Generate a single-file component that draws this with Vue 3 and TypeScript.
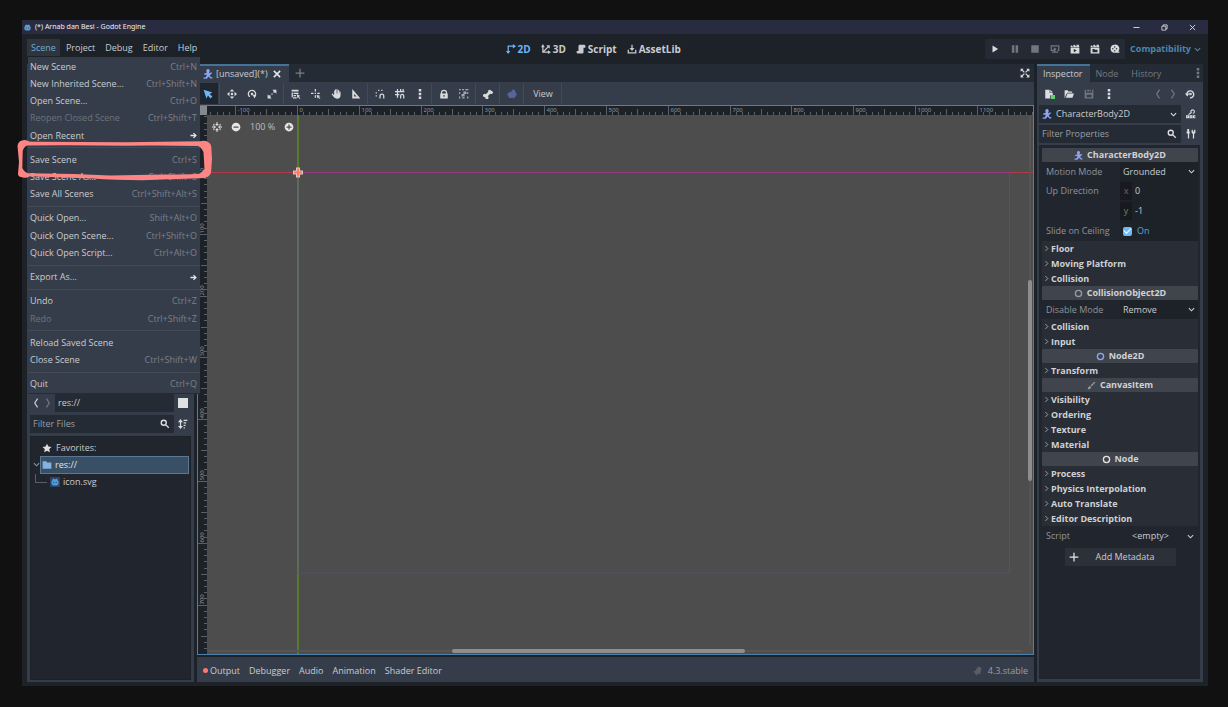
<script setup lang="ts">
import { h } from 'vue'

interface Glyph { fill?: string; stroke?: string; width?: number }

const glyphs: Record<string, Glyph> = {
  play: { fill: 'M4 2.5v11l9-5.5z' },
  pause: { fill: 'M3 2h4v12H3zM9 2h4v12H9z' },
  stop: { fill: 'M2 2h12v12H2z' },
  remote: { fill: 'M1 2h14v9h-3v-2h1V4H3v5h3v2H1zM6 5l5 3-5 3zM7 10h2v2h4v2H3v-2h4z' },
  clapPlay: { fill: 'M1 3l2-1 1 2h2L5 1.5l3-.5 1 2.500h2L10 1h4l1 4H1zM1 6h14v9H1zM6 8v5l5-2.500z' },
  clapFolder: { fill: 'M1 3l2-1 1 2h2L5 1.5l3-.5 1 2.500h2L10 1h4l1 4H1zM1 6h14v9H1zM4 8v5h8V9H8L7 8z' },
  movie: { fill: 'M7.500 1a6.500 6.500 0 1 0 0 13H15v-2h-2A6.500 6.500 0 0 0 7.500 1zM7.500 3.500a1.200 1.200 0 1 1 0 2.400 1.200 1.200 0 0 1 0-2.400zM4.500 6.500a1.200 1.200 0 1 1 0 2.400 1.200 1.200 0 0 1 0-2.400zM10.500 6.500a1.200 1.200 0 1 1 0 2.400 1.200 1.200 0 0 1 0-2.400zM7.500 9.500a1.200 1.200 0 1 1 0 2.400 1.200 1.200 0 0 1 0-2.400z' },
  twoD: { stroke: 'M3.500 13V3.500H13', fill: 'M11 0l5 3.500L11 7zM0 11h7l-3.500 5z', width: 2 },
  threeD: { stroke: 'M3 3v10h10M3 13L12 4', fill: 'M0 5l3-5 3 5zM11 10l5 3-5 3zM8.500 2H14v5.500z', width: 2 },
  script: { fill: 'M6 1a2 2 0 0 0-2 2v8H1v2a2 2 0 0 0 2 2h7a2 2 0 0 0 2-2V6h3V3a2 2 0 0 0-2-2z' },
  assetLib: { stroke: 'M2 9v5h12V9M8 1v8', fill: 'M4 6.500h8L8 11z', width: 2 },
  select: { fill: 'M1 1l4.500 14 2.500-4.500L12 15l3-3-4.500-4L15 5.500z' },
  move: { fill: 'M8 0L4.500 4h7zM8 16l-3.500-4h7zM0 8l4-3.500v7zM16 8l-4-3.500v7zM8 6a2 2 0 1 0 0 4 2 2 0 0 0 0-4z' },
  rotate: { stroke: 'M4.500 12.500A5.800 5.800 0 1 1 12 12', fill: 'M9 9h6l-3 6zM8 6a2 2 0 1 0 0 4 2 2 0 0 0 0-4z', width: 2 },
  scale: { stroke: 'M10.500 5.500l2-2M5.500 10.500l-2 2', fill: 'M8.500 1H15v6.500zM1 8.500V15h6.500zM7 7h2v2H7z', width: 2.4 },
  list: { fill: 'M1 1h11v3H1zM1 5.500h2V15H1zM4 6h8v2H4zM4 9.500h4v2H4zM4 13h5v2H4zM1 13h3v2H1zM9 8l6 3-2.500 1L15 15l-1 1-2.500-3L10.500 15z' },
  pivot: { stroke: 'M7 0v4M0 7h4M7 10v4M10 7h4', fill: 'M6 6h2v2H6zM9 9l6 2-2.500 1.500L15 15l-1 1-2.500-2.500L10.500 15.500z', width: 2 },
  pan: { fill: 'M6 1.500a1 1 0 0 1 2 0V7h.6V1a1 1 0 0 1 2 0v6h.6V2.500a1 1 0 0 1 2 0V7h.3V5a.9.9 0 0 1 1.800 0v5a5.500 5.500 0 0 1-5.500 5.500C6 15.500 4 13 1 8.500c0-1.500 2-1.500 2.500 0L5 10V3a.7.7 0 0 1 1 0z' },
  ruler: { fill: 'M2 0v15h13zM5 8l4 4H5z' },
  smartSnap: { fill: 'M1 5h2v2H1zM1 10h2v2H1zM5 1h2v2H5zM10 1h2v2h-2z', stroke: 'M8 15v-4a3 3 0 0 1 6 0v4', width: 2 },
  gridSnap: { stroke: 'M4 0v14M0 4h15M0 9h7M9 0v5M13 0v5M9 15v-4a2.500 2.500 0 0 1 5 0v4', width: 2 },
  dots: { fill: 'M6 0h4v4H6zM6 6h4v4H6zM6 12h4v4H6z' },
  lock: { fill: 'M8 1a5 5 0 0 0-5 5v1H2v8h12V7h-1V6a5 5 0 0 0-5-5zM8 3a3 3 0 0 1 3 3v1H5V6a3 3 0 0 1 3-3zM7 9.500h2v3H7z' },
  group: { fill: 'M0 0h3v2H0zM5 0h3v2H5zM10 0h5v2h-5zM0 5h2v3H0zM13 5h2v3h-2zM0 12h2v3H0zM5 13h4v2H5zM13 12h2v3h-2zM7 4h5v4H7zM4 8h5v4H4z' },
  bone: { fill: 'M10.500 1A2.600 2.600 0 0 0 8.500 4.500L4.500 8.500A2.600 2.600 0 1 0 4 12.500a2.600 2.600 0 1 0 3.500-1L11.500 7.500A2.600 2.600 0 1 0 13 3a2.600 2.600 0 0 0-2.500-2z' },
  blob: { fill: 'M9 1a3 3 0 0 1 4 4c3 1 3 5 1 6-1 3-4 4-6 3-3 1-6 0-6-3-2-1-2-5 1-5 1-2 3-2 4-1 0-2 1-3 2-4z' },
  expand: { stroke: 'M3 3l4 4M13 3L9 7M3 13l4-4M13 13L9 9', fill: 'M1 1h5L1 6zM15 1v5l-5-5zM1 15v-5l5 5zM15 15h-5l5-5z', width: 2 },
  center: { stroke: 'M8 0v4M8 12v4M0 8h4M12 8h4M3 3v3M13 3v3M3 10v3M13 10v3', fill: 'M5 3h6L8 6.500zM5 13h6L8 9.500zM3.500 5.500v5L6.500 8zM12.500 5.500v5L9.500 8z', width: 1.6 },
  minus: { fill: 'M8 1a7 7 0 1 0 0 14A7 7 0 0 0 8 1zM4 7h8v2H4z' },
  plus: { fill: 'M8 1a7 7 0 1 0 0 14A7 7 0 0 0 8 1zM7 4h2v3h3v2H9v3H7V9H4V7h3z' },
  add: { stroke: 'M8 1v14M1 8h14', width: 2 },
  close: { stroke: 'M3 3l10 10M13 3L3 13', width: 2.5 },
  body: { fill: 'M8 0a3 3 0 0 1 2 5v2l3-2 1.500 1.500L11 10v1l2 2h2v2h-3l-3-3-3 3.500H1v-2h3l2-3V9H2V7l4-1V5a3 3 0 0 1 2-5z' },
  doc: { fill: 'M2 1h7v5h5v4h-4v5H2zM10 1l4 4h-4z' },
  openFolder: { fill: 'M1 2h5l1 2h6v2H5l-3 6V14H1zM5.500 7H16l-2.500 7H3z' },
  save: { fill: 'M1 1h2v5h10V1h2v14H1zM5 1h3v3H5zM9 1h2v3H9zM4 9v4h8V9z' },
  prev: { stroke: 'M10.500 1L6 8l4.500 7', width: 2 },
  next: { stroke: 'M5.500 1L10 8l-4.500 7', width: 2 },
  history: { stroke: 'M3 9a5.500 5.500 0 1 1 5 5M8 8h3', fill: 'M0 7h7l-3.500 5zM7 6h2v4H7z', width: 2.2 },
  docs: { stroke: 'M9 6.500a2.800 2.800 0 1 1 2 .5M8 6L4 9M1 14h3V11H1zM6.500 11h3v3h-3zM15 11h-3v3h3', width: 1.8 },
  tools: { fill: 'M2 0h3v4h1v3H5v8H3V7H1V4h1zM9 1h2v3h2V1h2v5l-2 2v7h-2V8L9 6z' },
  search: { stroke: 'M6 2a4 4 0 1 0 0 8 4 4 0 0 0 0-8zM9 9l5 5', width: 2.2 },
  sort: { stroke: 'M4 3v10M9 2h6M9 6h4M9 10h3M9 14h2', fill: 'M0 5l4-5 4 5zM0 11h8l-4 5z', width: 2 },
  star: { fill: 'M8 1l2.200 4.500 5 .7-3.600 3.500.9 5L8 12.300 3.500 14.700l.9-5L.8 6.200l5-.7z' },
  folder: { fill: 'M1 2h6l1 2h7v10H1z' },
  down: { stroke: 'M2 5l6 6 6-6', width: 2.6 },
  right: { stroke: 'M5.500 2.500L11 8l-5.500 5.500', width: 2.2 },
  arrow: { stroke: 'M1 8h12M8 2.500L13.500 8 8 13.500', width: 3 },
  ring: { stroke: 'M8 2.500a5.500 5.500 0 1 0 0 11 5.500 5.500 0 0 0 0-11z', width: 2.4 },
  brush: { stroke: 'M14 2L7 9', fill: 'M5 9l2.500 2.500C6 15 4 14.500 1 15c1.500-1.500.5-5 4-6z', width: 2.5 },
  bell: { fill: 'M9 2c3-2 6 0 6 4l-2 5 1 2-5-1-1 3-3-2v-2L1 9l4-1z' },
  robot: { fill: 'M5 1l2 1.500h2L11 1l2 1.500v2L15 6v6l-3 3H4l-3-3V6l2-1.500v-2zM4.500 8v2h2V8zM9.500 8v2h2V8z' },
  min: { stroke: 'M1 8h14', width: 2 },
  restore: { stroke: 'M2 5h9v9H2zM5 5V2h9v9h-3', width: 1.8 },
  quit: { stroke: 'M2 2l12 12M14 2L2 14', width: 2 },
}

const Icon = (props: { name: string }) => {
  const g = glyphs[props.name]
  return h('svg', { class: 'icon', viewBox: '0 0 16 16', 'aria-hidden': 'true' }, [
    g.stroke ? h('path', { d: g.stroke, fill: 'none', stroke: 'currentColor', 'stroke-width': g.width }) : null,
    g.fill ? h('path', { d: g.fill, fill: 'currentColor', 'fill-rule': 'evenodd' }) : null,
  ])
}
Icon.props = ['name']

interface MenuItem { label: string; keys?: string; off?: boolean; sub?: boolean }
const menu: MenuItem[][] = [
  [
    { label: 'New Scene', keys: 'Ctrl+N' },
    { label: 'New Inherited Scene...', keys: 'Ctrl+Shift+N' },
    { label: 'Open Scene...', keys: 'Ctrl+O' },
    { label: 'Reopen Closed Scene', keys: 'Ctrl+Shift+T', off: true },
    { label: 'Open Recent', sub: true },
  ],
  [
    { label: 'Save Scene', keys: 'Ctrl+S' },
    { label: 'Save Scene As...', keys: 'Ctrl+Shift+S' },
    { label: 'Save All Scenes', keys: 'Ctrl+Shift+Alt+S' },
  ],
  [
    { label: 'Quick Open...', keys: 'Shift+Alt+O' },
    { label: 'Quick Open Scene...', keys: 'Ctrl+Shift+O' },
    { label: 'Quick Open Script...', keys: 'Ctrl+Alt+O' },
  ],
  [{ label: 'Export As...', sub: true }],
  [
    { label: 'Undo', keys: 'Ctrl+Z' },
    { label: 'Redo', keys: 'Ctrl+Shift+Z', off: true },
  ],
  [
    { label: 'Reload Saved Scene' },
    { label: 'Close Scene', keys: 'Ctrl+Shift+W' },
  ],
  [{ label: 'Quit', keys: 'Ctrl+Q' }],
]

const menus = ['Scene', 'Project', 'Debug', 'Editor', 'Help']
const workspaces = [
  { label: '2D', icon: 'twoD' },
  { label: '3D', icon: 'threeD' },
  { label: 'Script', icon: 'script' },
  { label: 'AssetLib', icon: 'assetLib' },
]
const runButtons = [
  { icon: 'play', label: 'Run project', dim: false },
  { icon: 'pause', label: 'Pause', dim: true },
  { icon: 'stop', label: 'Stop', dim: true },
  { icon: 'remote', label: 'Remote debug', dim: true },
  { icon: 'clapPlay', label: 'Run current scene', dim: false },
  { icon: 'clapFolder', label: 'Run specific scene', dim: false },
  { icon: 'movie', label: 'Movie maker', dim: false },
]
const tools = [
  ['select'],
  ['move', 'rotate', 'scale'],
  ['list', 'pivot', 'pan', 'ruler'],
  ['smartSnap', 'gridSnap', 'dots'],
  ['lock', 'group'],
  ['bone'],
  ['blob'],
]
const bottomTabs = ['Debugger', 'Audio', 'Animation', 'Shader Editor']

type Row =
  | { kind: 'category'; label: string; icon: string; tone: string }
  | { kind: 'section'; label: string }
  | { kind: 'choice'; label: string; value: string }
  | { kind: 'number'; label: string; axis: string; value: string }
  | { kind: 'check'; label: string }
const section = (label: string): Row => ({ kind: 'section', label })
const rows: Row[] = [
  { kind: 'category', label: 'CharacterBody2D', icon: 'body', tone: 'blue' },
  { kind: 'choice', label: 'Motion Mode', value: 'Grounded' },
  { kind: 'number', label: 'Up Direction', axis: 'x', value: '0' },
  { kind: 'number', label: '', axis: 'y', value: '-1' },
  { kind: 'check', label: 'Slide on Ceiling' },
  section('Floor'), section('Moving Platform'), section('Collision'),
  { kind: 'category', label: 'CollisionObject2D', icon: 'ring', tone: 'grey' },
  { kind: 'choice', label: 'Disable Mode', value: 'Remove' },
  section('Collision'), section('Input'),
  { kind: 'category', label: 'Node2D', icon: 'ring', tone: 'blue' },
  section('Transform'),
  { kind: 'category', label: 'CanvasItem', icon: 'brush', tone: 'grey' },
  section('Visibility'), section('Ordering'), section('Texture'), section('Material'),
  { kind: 'category', label: 'Node', icon: 'ring', tone: 'white' },
  section('Process'), section('Physics Interpolation'), section('Auto Translate'), section('Editor Description'),
]

// Canvas geometry: world units are scaled around the scene origin.
const unit = 0.618
const origin = { x: 100, y: 67 }
const page = { w: 1152 * unit, h: 648 * unit }
const ticks = Array.from({ length: 300 }, (_, i) => (i - 20) * 10)
const tickLength = (v: number) => (v % 100 === 0 ? 9 : v % 50 === 0 ? 6 : 3)
const columnLabels = [-100, 0, 100, 200, 300, 400, 500, 600, 700, 800, 900, 1000, 1100]
const rowLabels = [0, 100, 200, 300, 400, 500, 600, 700]
const px = (v: number) => Math.round(origin.x + v * unit) - 0.5
const py = (v: number) => Math.round(origin.y + v * unit) - 0.5
</script>

<template>
  <div class="page">
    <div class="window">
      <header class="titlebar">
        <Icon name="robot" class="logo" />
        <h1>(*) Arnab dan Besi - Godot Engine</h1>
        <button aria-label="Minimize"><Icon name="min" /></button>
        <button aria-label="Restore"><Icon name="restore" /></button>
        <button aria-label="Close window"><Icon name="quit" /></button>
      </header>

      <div class="topbar">
        <nav class="menubar">
          <button v-for="(m, i) in menus" :key="m" :class="{ open: i === 0 }">{{ m }}</button>
          <div class="menu" role="menu">
            <template v-for="(group, g) in menu" :key="g">
              <hr v-if="g > 0" />
              <button v-for="item in group" :key="item.label" role="menuitem" :disabled="item.off">
                <span>{{ item.label }}</span>
                <kbd v-if="item.keys">{{ item.keys }}</kbd>
                <Icon v-if="item.sub" name="arrow" class="small" />
              </button>
            </template>
          </div>
        </nav>
        <nav class="workspaces">
          <button v-for="(w, i) in workspaces" :key="w.label" :class="{ active: i === 0 }">
            <Icon :name="w.icon" />{{ w.label }}
          </button>
        </nav>
        <div class="run">
          <div class="run-buttons">
            <button v-for="b in runButtons" :key="b.icon" :aria-label="b.label" :class="{ dim: b.dim }"><Icon :name="b.icon" /></button>
          </div>
          <button class="renderer">Compatibility<Icon name="down" class="small" /></button>
        </div>
      </div>

      <div class="body">
        <aside class="left">
          <div class="scene-dock"></div>
          <section class="files">
            <div class="file-row">
              <button class="nav" aria-label="Back"><Icon name="prev" /></button>
              <button class="nav dim" aria-label="Forward"><Icon name="next" /></button>
              <div class="field"><input value="res://" aria-label="Path" /></div>
              <button class="side" aria-label="Toggle split mode"><span class="square"></span></button>
            </div>
            <div class="file-row">
              <label class="field search">
                <input placeholder="Filter Files" aria-label="Filter Files" /><Icon name="search" />
              </label>
              <button class="side" aria-label="Sort"><Icon name="sort" /></button>
            </div>
            <ul class="tree">
              <li class="favorites"><Icon name="star" />Favorites:</li>
              <li class="root"><Icon name="down" class="twist" /><span class="picked"><Icon name="folder" />res://</span></li>
              <li class="child"><span class="branch"></span><span class="thumb"><Icon name="robot" /></span>icon.svg</li>
            </ul>
          </section>
        </aside>

        <main class="center">
          <div class="tabs">
            <div class="tab current">
              <Icon name="body" class="blue" /><span>[unsaved](*)</span>
              <button aria-label="Close tab"><Icon name="close" /></button>
            </div>
            <button class="add-tab" aria-label="New tab"><Icon name="add" /></button>
            <button class="expand" aria-label="Distraction free mode"><Icon name="expand" /></button>
          </div>
          <div class="toolbar">
            <div v-for="(group, g) in tools" :key="g" class="tool-group">
              <button v-for="t in group" :key="t" :class="t" :aria-label="t"><Icon :name="t" /></button>
            </div>
            <div class="tool-group"><button class="view">View</button></div>
          </div>
          <div class="canvas">
            <svg class="drawing" width="100%" height="100%" aria-hidden="true">
              <path :d="`M${origin.x} 9V2000`" stroke="#5a7a2d" stroke-width="2" />
              <path :d="`M9 ${py(0)}H2000`" stroke="#b23a4a" />
              <rect :x="px(0)" :y="py(0)" :width="page.w" :height="page.h" fill="none" stroke="#57506f" />
              <path :d="`M${origin.x} ${py(0)}V${py(648)}`" stroke="#5c6b60" stroke-width="2" />
              <path :d="`M${origin.x} ${py(0)}H${px(1152)}`" stroke="#983c82" />
              <path :d="`M${origin.x - 5} ${py(0)}h10M${origin.x} ${py(0) - 5}v10`" stroke="#dfc6c0" stroke-width="4" />
              <path :d="`M${origin.x - 4} ${py(0)}h8M${origin.x} ${py(0) - 4}v8`" stroke="#ff7c62" stroke-width="2" />
              <rect width="9" height="100%" fill="#1d2229" />
              <rect width="100%" height="9" fill="#1d2229" />
              <g stroke="#5b6067">
                <template v-for="v in ticks" :key="v">
                  <path v-if="px(v) > 9" :d="`M${px(v)} 9v-${tickLength(v)}`" />
                  <path v-if="py(v) > 9" :d="`M9 ${py(v)}h-${tickLength(v)}`" />
                </template>
              </g>
              <g class="ruler-text">
                <text v-for="v in columnLabels" :key="`c${v}`" :x="px(v) + 2" y="6">{{ v }}</text>
                <text v-for="v in rowLabels" :key="`r${v}`" :transform="`translate(6 ${py(v) - 1}) rotate(-90)`">{{ v }}</text>
              </g>
              <rect width="9" height="9" fill="#85888d" />
            </svg>
            <div class="zoom">
              <button aria-label="Center view"><Icon name="center" /></button>
              <button aria-label="Zoom out"><Icon name="minus" /></button>
              <button class="level">100 %</button>
              <button aria-label="Zoom in"><Icon name="plus" /></button>
            </div>
            <div class="track horizontal"><span></span></div>
            <div class="track vertical"><span></span></div>
          </div>
          <footer class="bottom">
            <button class="output">Output</button>
            <button v-for="t in bottomTabs" :key="t">{{ t }}</button>
            <span class="version"><Icon name="bell" /><a href="#">4.3.stable</a></span>
          </footer>
        </main>

        <aside class="right">
          <div class="tabs">
            <button class="tab current">Inspector</button>
            <button class="tab">Node</button>
            <button class="tab">History</button>
            <button class="more" aria-label="Dock options"><Icon name="dots" /></button>
          </div>
          <div class="inspector">
            <div class="actions">
              <button aria-label="New resource" class="new"><Icon name="doc" /></button>
              <button aria-label="Open resource"><Icon name="openFolder" /></button>
              <button aria-label="Save resource" class="dim"><Icon name="save" /></button>
              <button aria-label="More"><Icon name="dots" /></button>
              <span class="grow"></span>
              <button class="narrow dim" aria-label="Previous"><Icon name="prev" /></button>
              <button class="narrow dim" aria-label="Next"><Icon name="next" /></button>
              <button aria-label="History"><Icon name="history" /></button>
            </div>
            <div class="lookup">
              <div class="field object">
                <Icon name="body" class="blue" />
                <select aria-label="Edited object"><option>CharacterBody2D</option></select>
                <Icon name="down" class="small" />
              </div>
              <button aria-label="Open documentation"><Icon name="docs" /></button>
            </div>
            <div class="lookup">
              <label class="field search">
                <input placeholder="Filter Properties" aria-label="Filter Properties" /><Icon name="search" />
              </label>
              <button aria-label="Property tools"><Icon name="tools" /></button>
            </div>
            <div class="properties">
              <template v-for="(r, i) in rows" :key="i">
                <h2 v-if="r.kind === 'category'"><Icon :name="r.icon" :class="r.tone" />{{ r.label }}</h2>
                <button v-else-if="r.kind === 'section'" class="section"><Icon name="right" />{{ r.label }}</button>
                <div v-else-if="r.kind === 'choice'" class="prop choice">
                  <label :for="`p${i}`">{{ r.label }}</label>
                  <div class="value">
                    <select :id="`p${i}`"><option>{{ r.value }}</option></select><Icon name="down" class="small" />
                  </div>
                </div>
                <div v-else-if="r.kind === 'number'" class="prop">
                  <span>{{ r.label }}</span>
                  <div class="value">
                    <label :for="`p${i}`" class="axis" :class="r.axis">{{ r.axis }}</label>
                    <input :id="`p${i}`" :value="r.value" />
                  </div>
                </div>
                <div v-else class="prop">
                  <span>{{ r.label }}</span>
                  <label class="value check"><input type="checkbox" checked />On</label>
                </div>
              </template>
              <div class="prop">
                <span>Script</span>
                <button class="value resource">&lt;empty&gt;<Icon name="down" class="small" /></button>
              </div>
              <button class="metadata"><Icon name="add" /><span>Add Metadata</span></button>
            </div>
          </div>
        </aside>
      </div>
    </div>

    <svg class="marker" width="200" height="44" viewBox="0 0 200 44" aria-hidden="true">
      <path fill="#fd8584" fill-rule="evenodd" d="M3.500 7Q4 3 7 1.700Q11 .5 13 1.500Q15 3 20 2.700L112 3.300L186 2.300Q190 1 193 2.500Q197 4 197.300 8L198 20L197 34Q195 38 191 39Q165 40 129 41.200Q100 41 79 39.500L16 37.300Q12 39.500 9 38.500Q4 38 4 35L5 23ZM13 6.500Q9.500 8 8.700 12L8.300 29Q10 33 14 34.300L60 35L96 36.500L150 35.500Q184 35.500 186 34.500Q188 33 190.500 30L189.500 13Q187 8 184 7Q140 6 112 6.800Q60 6 13 6.500Z" />
    </svg>
  </div>
</template>

<style>
body { margin: 0; background: #111; }
</style>

<style scoped>
* { box-sizing: border-box; }
.page { position: relative; display: flex; min-height: 100vh; padding: 20px 20px 21px 22px; background: #111; color: #c9cbcf; font: 9px/12px "Open Sans", "Noto Sans", sans-serif; }
button, input, select { margin: 0; padding: 0; border: 0; background: none; color: inherit; font: inherit; appearance: none; outline: 0; border-radius: 0; min-width: 0; }
button { display: flex; align-items: center; justify-content: center; white-space: nowrap; }
input::placeholder { color: #9a9da3; opacity: 1; }
.icon { display: block; flex: none; width: 10px; height: 10px; }
.icon.small { width: 7px; height: 7px; }
.blue { color: #8da5f3; }
.grey { color: #96999d; }
.white { color: #e0e0e0; }
.dim { color: #71767e; }
.grow { flex: 1; }

.window { flex: 1; display: flex; flex-direction: column; min-width: 0; background: #1d2229; }
.titlebar { display: flex; align-items: center; height: 14px; padding: 0 2px; background: #292c40; }
.titlebar .logo { width: 9px; height: 9px; color: #5d9fd6; }
.titlebar h1 { flex: 1; margin: 0 0 0 4px; color: #eeeff2; font: 7px/12px "Noto Sans", sans-serif; }
.titlebar button { width: 28px; height: 14px; color: #e4e5ea; }
.titlebar .icon { width: 7px; height: 7px; }

.topbar { display: flex; align-items: center; justify-content: space-between; height: 30px; padding: 0 5px; }
.menubar { position: relative; display: flex; gap: 2px; align-self: flex-start; padding-top: 5px; }
.menubar > button { height: 17px; padding: 0 4px; }
.menubar > .open { background: #30343c; color: #6fabdc; }
.menu { position: absolute; z-index: 2; top: 23px; left: 1px; display: flex; flex-direction: column; width: 172px; height: 337px; padding-top: 1px; background: #363d4a; border-bottom: 1px solid #262c36; }
.menu button { flex: 1; justify-content: space-between; padding: 0 3px 0 2px; }
.menu button:disabled, .menu kbd { color: #7b8089; }
.menu button:disabled { color: #6c727c; }
.menu kbd { font: inherit; }
.menu .small { color: #e4e5e7; }
.menu hr { width: 100%; height: 1px; margin: 3px 0; border: 0; background: #434a56; }
.workspaces { display: flex; gap: 10px; font-weight: 700; font-size: 10px; }
.workspaces button { gap: 2px; }
.workspaces .active { color: #6cb4f5; }
.run { display: flex; align-items: center; gap: 5px; }
.run-buttons { display: flex; height: 20px; background: #252b34; border-radius: 2px; }
.run-buttons button { width: 20px; color: #d9dadc; }
.run-buttons button.dim { color: #71767e; }
.renderer { gap: 3px; margin-right: 2px; color: #4c86ae; font-weight: 700; }

.body { flex: 1; display: flex; gap: 3px; min-height: 0; padding: 0 5px 4px; }
.left { display: flex; flex-direction: column; width: 167px; }
.scene-dock { flex: 330 1 0; background: #363d4a; }
.files { flex: 288 1 0; display: flex; flex-direction: column; gap: 3px; padding: 3px 3px 2px; background: #363d4a; }
.file-row { display: flex; height: 18px; }
.field { flex: 1; display: flex; align-items: center; height: 18px; padding: 0 4px 0 3px; background: #252b34; }
.field input, .field select { flex: 1; }
.field input { width: 100%; }
.field > .icon { color: #dcdde0; }
.field > .icon.blue { color: #8da5f3; }
.file-row .nav { width: 12px; }
.file-row .nav + .field { margin-left: 1px; }
.side { width: 17px; color: #dcdde0; }
.square { width: 10px; height: 10px; background: #e0e0e0; }
.tree { flex: 1; margin: 0; padding: 2px 1px 0 2px; list-style: none; background: #21262e; border: 1px solid #1d2229; }
.tree li { display: flex; align-items: center; height: 17px; }
.favorites { gap: 4px; padding-left: 9px; }
.favorites .icon { color: #e0e0e0; }
.twist { width: 7px; height: 7px; color: #8d9197; }
.picked { flex: 1; display: flex; align-items: center; gap: 3px; height: 18px; padding-left: 1px; background: #384f66; border: 1px solid #587894; color: #e2e4e7; }
.picked .icon { color: #84b3e2; }
.tree .child { height: 18px; }
.branch { width: 12px; height: 9px; margin: 0 3px 8px 2px; border-left: 1px solid #5b6067; border-bottom: 1px solid #5b6067; }
.thumb { display: grid; place-items: center; width: 10px; height: 10px; margin-right: 3px; background: #2e4262; color: #4d9bdc; }
.thumb .icon { width: 8px; height: 8px; }

.center { flex: 1; display: flex; flex-direction: column; min-width: 0; }
.tabs { display: flex; height: 18px; background: #252b34; }
.tab { display: flex; align-items: center; padding: 0 7px 0 6px; border-top: 2px solid transparent; color: #747a83; }
.tab.current { background: #363d4a; border-top-color: #44739a; color: #c9cbcf; }
.center .tab button { margin-left: 4px; color: #e4e5e7; }
.center .tab span { margin-left: 3px; }
.add-tab { width: 22px; color: #7b8088; }
.expand { width: 18px; margin-left: auto; color: #dcdde0; }
.toolbar { display: flex; height: 23px; padding: 1px 0 1px 1px; background: #363d4a; }
.tool-group { display: flex; padding-right: 4px; background: linear-gradient(#444b57, #444b57) no-repeat right 2px center / 1px 100%; }
.tool-group button { width: 20px; color: #d9dadc; }
.tool-group .select { background: #20262f; color: #6cb9fa; }
.tool-group .group { color: #a3a7ad; }
.tool-group .blob { color: #55659a; }
.tool-group .view { width: 34px; color: #c9cbcf; }
.canvas { flex: 1; position: relative; overflow: hidden; background: #4d4d4d; border: 1px solid #4b82ad; }
.drawing { position: absolute; inset: 0; }
.ruler-text { fill: #92969b; font: 6px "Noto Sans", sans-serif; }
.zoom { position: relative; display: flex; align-items: center; width: max-content; margin: 15px 0 0 14px; gap: 9px; color: #e6e6e6; }
.zoom .level { color: #bfbfbf; }
.track { position: absolute; background: #555; }
.track span { position: absolute; background: #8e8e8e; border-radius: 2px; }
.horizontal { left: 10px; right: 11px; bottom: 2px; height: 2px; }
.horizontal span { left: 30%; width: 36%; top: -1px; height: 4px; }
.vertical { right: 2px; top: 10px; bottom: 9px; width: 2px; }
.vertical span { top: 31%; height: 38%; left: -1px; width: 4px; }
.bottom { display: flex; align-items: center; gap: 9px; height: 25px; margin-top: 2px; padding: 2px 6px 0; background: #363d4a; }
.output::before { content: ""; width: 5px; height: 5px; margin-right: 2px; border-radius: 50%; background: #ff786b; }
.version { display: flex; align-items: center; gap: 6px; margin-left: auto; color: #595e66; }
.version a { color: #9a9ea5; text-decoration: none; }

.right { display: flex; flex-direction: column; width: 166px; }
.right .more { width: 10px; margin-left: auto; color: #747a83; }
.inspector { flex: 1; display: flex; flex-direction: column; padding: 0 3px 3px 2px; background: #363d4a; }
.actions { display: flex; height: 23px; color: #dcdde0; }
.actions button { width: 20px; }
.actions .narrow { width: 15px; }
.actions .new { position: relative; }
.actions .new::after { content: ""; position: absolute; right: 4px; bottom: 6px; width: 4px; height: 4px; background: #5fd36b; }
.lookup { display: flex; margin-bottom: 2px; color: #dcdde0; }
.lookup > button { width: 19px; }
.lookup .object { gap: 4px; color: #c9cbcf; }
.properties { flex: 1; display: flex; flex-direction: column; padding: 3px 2px 0 3px; background: #21262e; }
.properties h2 { display: flex; align-items: center; justify-content: center; gap: 4px; height: 14px; margin: 0; background: #40444d; border-radius: 1px; font-size: 9px; line-height: 12px; color: #cfd1d4; }
.properties h2 .icon { width: 9px; height: 9px; }
.section { justify-content: flex-start; gap: 1px; height: 15px; padding-left: 1px; background: #282d36; color: #cfd1d4; font-weight: 700; }
.section .icon { width: 7px; height: 7px; color: #a1a4a9; }
.prop { display: grid; grid-template-columns: 1fr 1fr; align-items: center; height: 20px; color: #90949a; }
.prop > :first-child { padding-left: 4px; white-space: nowrap; }
.choice { height: 19px; }
.value { display: flex; align-items: center; height: 100%; padding-right: 3px; background: #1d2229; color: #c9cbcf; }
.value select { flex: 1; padding-left: 3px; }
.value input { width: 100%; padding-left: 3px; }
.axis { flex: none; width: 12px; height: 18px; text-align: center; line-height: 18px; background: #181a20; }
.axis.x { color: #8c5a50; }
.axis.y { color: #58905e; }
.value.check { gap: 5px; padding-left: 3px; color: #5aa1dc; }
.value.check input { flex: none; display: grid; place-items: center; width: 9px; height: 9px; padding: 0; border-radius: 2px; background: #6fb9fb; }
.value.check input::before { content: ""; width: 6px; height: 3px; margin-bottom: 2px; border: solid #fff; border-width: 0 0 1px 1px; transform: rotate(-45deg); }
.value.resource { justify-content: flex-end; gap: 18px; padding-right: 4px; background: none; }
.metadata { align-self: center; width: 111px; height: 18px; margin-top: 2px; padding: 0 4px; background: #2c3139; }
.metadata span { flex: 1; }
.metadata .icon { color: #e6e6e6; }
.marker { position: absolute; z-index: 3; top: 139px; left: 14px; }
</style>
